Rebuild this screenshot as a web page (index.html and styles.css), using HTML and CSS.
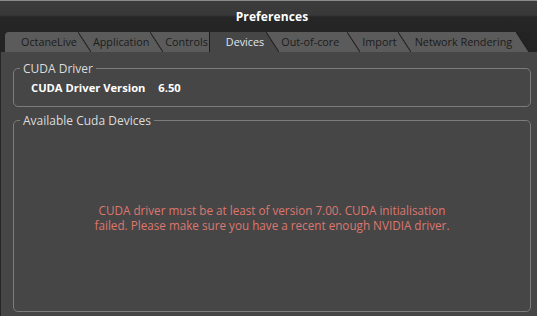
FILE: index.html
```html
<!DOCTYPE html>
<html lang="en">
<head>
    <meta charset="UTF-8">
    <title>Preferences</title>
    <link rel="stylesheet" href="styles.css">
</head>
<body>
    <div class="window">
        <div class="header">
            <div class="title">Preferences</div>
            <div class="tabs">
                <div class="tab first">OctaneLive</div>
                <div class="sep"></div>
                <div class="tab">Application</div>
                <div class="sep"></div>
                <div class="tab">Controls</div>
                <div class="tab active">Devices</div>
                <div class="sep from-active"></div>
                <div class="tab core">Out-of-core</div>
                <div class="sep"></div>
                <div class="tab">Import</div>
                <div class="sep"></div>
                <div class="tab network">Network Rendering</div>
                <div class="sep last"></div>
            </div>
        </div>

        <div class="content">
            <fieldset class="group driver">
                <legend>CUDA Driver</legend>
                <div class="row">
                    <span class="label">CUDA Driver Version</span>
                    <span class="value">6.50</span>
                </div>
            </fieldset>

            <fieldset class="group devices">
                <legend>Available Cuda Devices</legend>
                <p class="error">CUDA driver must be at least of version 7.00. CUDA initialisation<br>failed. Please make sure you have a recent enough NVIDIA driver.</p>
            </fieldset>
        </div>
    </div>
</body>
</html>
```

FILE: styles.css
```css
html, body {
    margin: 0;
    height: 100%;
}

body {
    font-family: "Open Sans", "DejaVu Sans", sans-serif;
    font-size: 12px;
    background: #464646;
}

.window {
    height: 100%;
    display: flex;
    flex-direction: column;
}

.header {
    border-top: 1px solid #8a8a8a;
    background: linear-gradient(#3c3c3c 0, #383838 14px, #262626 16px, #232323 100%);
}

.title {
    height: 31px;
    line-height: 31px;
    padding-left: 7px;
    text-align: center;
    color: #ffffff;
    font-weight: bold;
    font-size: 12px;
    letter-spacing: 0.1px;
}

.tabs {
    display: flex;
    height: 20px;
    padding-left: 5px;
}

.tab {
    line-height: 20px;
    font-size: 10.8px;
    background: #5b5b5b;
    color: #1c1c1c;
    padding: 0 1px 0 2px;
    white-space: nowrap;
}

.tab.first {
    padding-left: 16px;
    border-top-left-radius: 4px;
}

.tab.active {
    background: #464646;
    color: #dfe6f2;
    padding: 0 2px 0 16px;
    border-left: 1px solid #1e1e1e;
}

.tab.core {
    padding-right: 8px;
}

.tab.network {
    padding: 0 4px 0 4px;
}

.sep {
    width: 13px;
    background: linear-gradient(to top right, #5b5b5b calc(50% - 1px), #1e1e1e 50%, #5b5b5b calc(50% + 1px));
}

.sep.from-active {
    background: linear-gradient(to top right, #464646 calc(50% - 1px), #1e1e1e 50%, #5b5b5b calc(50% + 1px));
}

.sep.last {
    background: linear-gradient(to top right, #5b5b5b calc(50% - 1px), #1e1e1e 50%, #232323 calc(50% + 1px));
}

.content {
    flex: 1;
    border-left: 1px solid #262626;
    padding: 8px 6px 0 12px;
    display: flex;
    flex-direction: column;
    gap: 5px;
}

.group {
    margin: 0;
    border: 1px solid #7c7c7c;
    border-radius: 5px;
    padding: 0 6px;
}

.group legend {
    padding: 0 3px;
    color: #dcdcdc;
}

.driver {
    height: 47px;
    box-sizing: border-box;
}

.row {
    padding: 3px 0 0 11px;
    color: #ffffff;
    font-weight: bold;
    font-size: 11.2px;
}

.row .value {
    margin-left: 10px;
}

.devices {
    height: 200px;
    box-sizing: border-box;
}

.error {
    margin: 74px 0 0;
    text-align: center;
    font-size: 11.7px;
    color: #dd776f;
    line-height: 15px;
}
```
